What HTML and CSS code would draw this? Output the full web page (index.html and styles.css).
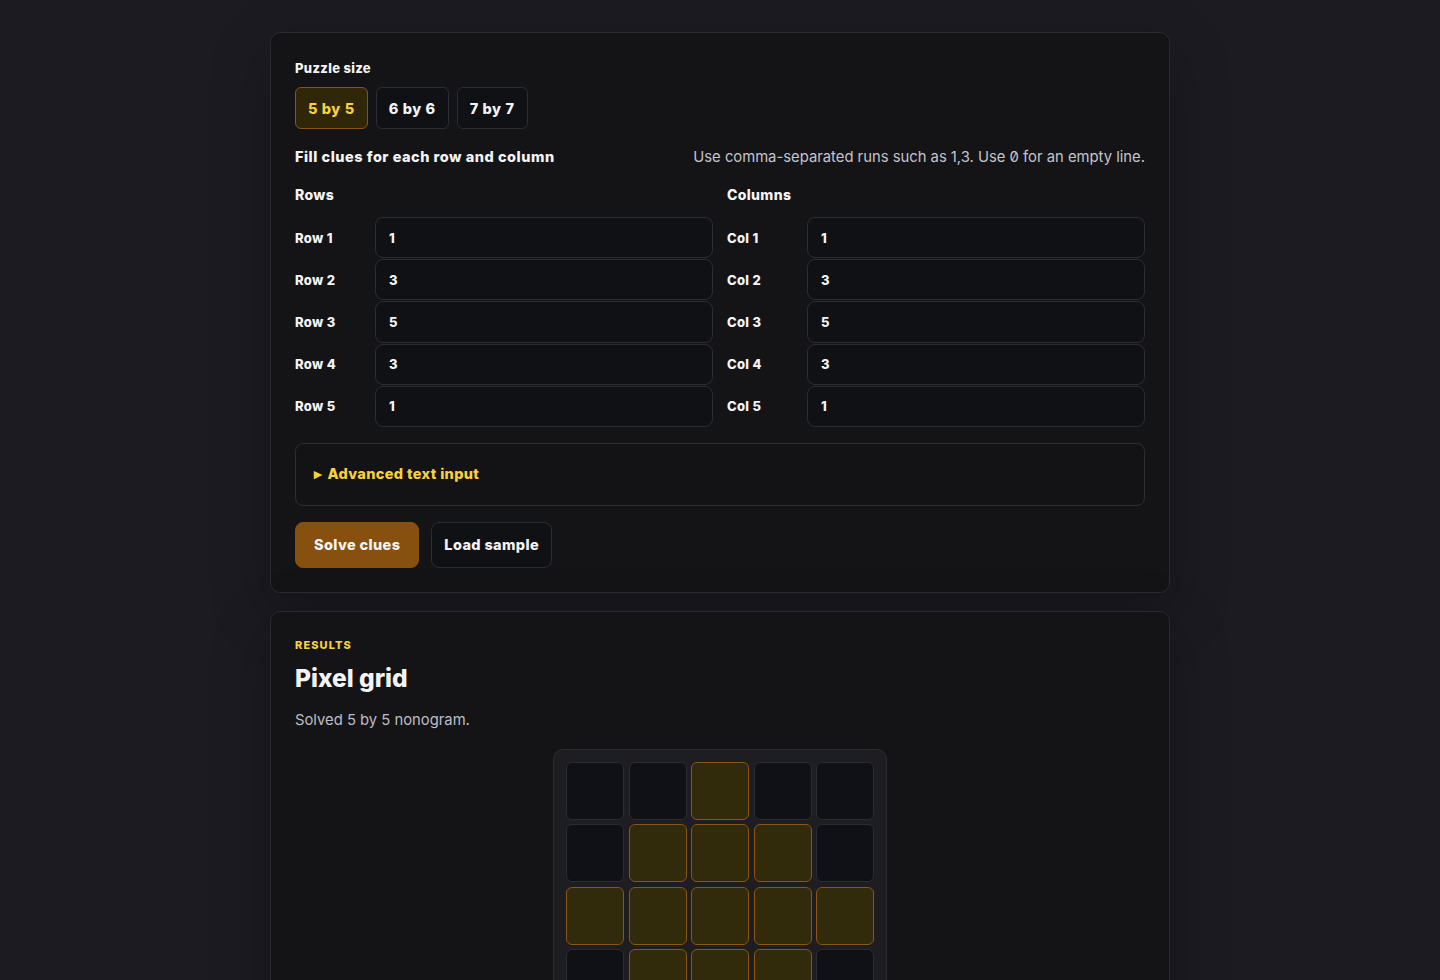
FILE: index.html
```html
<!DOCTYPE html>
<html lang="en">
<head>
<meta charset="utf-8">
<title>Nonogram solver</title>
<link rel="stylesheet" href="styles.css">
</head>
<body>
<main class="page">
  <section class="card">
    <div class="label">Puzzle size</div>
    <div class="sizes">
      <button class="size active">5 by 5</button>
      <button class="size">6 by 6</button>
      <button class="size">7 by 7</button>
    </div>
    <div class="cluehead">
      <div class="title">Fill clues for each row and column</div>
      <div class="hint">Use comma-separated runs such as 1,3. Use 0 for an empty line.</div>
    </div>
    <div class="groups">
      <div class="group">
        <div class="ghead">Rows</div>
        <div class="fields">
          <div class="field"><span class="flabel">Row 1</span><input class="finput" value="1"></div>
          <div class="field"><span class="flabel">Row 2</span><input class="finput" value="3"></div>
          <div class="field"><span class="flabel">Row 3</span><input class="finput" value="5"></div>
          <div class="field"><span class="flabel">Row 4</span><input class="finput" value="3"></div>
          <div class="field"><span class="flabel">Row 5</span><input class="finput" value="1"></div>
        </div>
      </div>
      <div class="group">
        <div class="ghead">Columns</div>
        <div class="fields">
          <div class="field"><span class="flabel">Col 1</span><input class="finput" value="1"></div>
          <div class="field"><span class="flabel">Col 2</span><input class="finput" value="3"></div>
          <div class="field"><span class="flabel">Col 3</span><input class="finput" value="5"></div>
          <div class="field"><span class="flabel">Col 4</span><input class="finput" value="3"></div>
          <div class="field"><span class="flabel">Col 5</span><input class="finput" value="1"></div>
        </div>
      </div>
    </div>
    <details class="adv">
      <summary class="advsum">Advanced text input</summary>
    </details>
    <div class="actions">
      <button class="btn primary">Solve clues</button>
      <button class="btn ghost">Load sample</button>
    </div>
  </section>
  <section class="card">
    <div class="eyebrow">RESULTS</div>
    <h2 class="rtitle">Pixel grid</h2>
    <p class="status">Solved 5 by 5 nonogram.</p>
    <div class="gridwrap">
      <div class="grid">
        <div class="cell"></div><div class="cell"></div><div class="cell on"></div><div class="cell"></div><div class="cell"></div>
        <div class="cell"></div><div class="cell on"></div><div class="cell on"></div><div class="cell on"></div><div class="cell"></div>
        <div class="cell on"></div><div class="cell on"></div><div class="cell on"></div><div class="cell on"></div><div class="cell on"></div>
        <div class="cell"></div><div class="cell on"></div><div class="cell on"></div><div class="cell on"></div><div class="cell"></div>
        <div class="cell"></div><div class="cell"></div><div class="cell on"></div><div class="cell"></div><div class="cell"></div>
      </div>
    </div>
  </section>
</main>
</body>
</html>
```
FILE: styles.css
```css
* { box-sizing: border-box; }
html, body { margin: 0; padding: 0; }
body {
  background: #1c1b22;
  color: #f4f4f6;
  font-family: Inter, "Noto Sans", "Liberation Sans", sans-serif;
  font-feature-settings: "zero" 1;
}
.page {
  width: 900px;
  margin: 0 auto;
  padding-top: 32px;
  display: flex;
  flex-direction: column;
  gap: 18px;
}
.card {
  background: #141417;
  border: 1px solid #2a2a31;
  border-radius: 10px;
  padding: 24px;
  box-shadow: 0 20px 60px rgba(0,0,0,0.25);
}
.label, .size, .title, .ghead, .flabel, .finput, .advsum, .btn, .eyebrow {
  font-family: Inter, "Noto Sans", sans-serif;
  font-weight: 800;
  letter-spacing: 0.025em;
}
.label {
  font-size: 13px;
  line-height: 20px;
  margin-top: 1px;
}
.sizes {
  display: flex;
  gap: 8px;
  margin-top: 9px;
}
.size {
  height: 42px;
  padding: 0 12px;
  background: #101115;
  border: 1px solid #2c2d33;
  border-radius: 6px;
  color: #f4f4f6;
  font-size: 14.5px;
  letter-spacing: 0.04em;
}
.size.active {
  background: #2f2708;
  border-color: #8a5412;
  color: #f7d23b;
}
.cluehead {
  display: flex;
  justify-content: space-between;
  align-items: center;
  margin-top: 18px;
  line-height: 20px;
}
.title { font-size: 14.5px; letter-spacing: 0.035em; }
.hint { font-size: 14.8px; color: #c4c4cc; }
.groups {
  display: grid;
  grid-template-columns: 1fr 1fr;
  gap: 14px;
  margin-top: 18px;
}
.ghead {
  font-size: 14px;
  line-height: 20px;
}
.fields {
  display: flex;
  flex-direction: column;
  gap: 1px;
  margin-top: 12px;
}
.field {
  display: grid;
  grid-template-columns: 80px 1fr;
  align-items: center;
}
.flabel {
  font-size: 13px;
}
.finput {
  height: 41.2px;
  width: 100%;
  background: #101115;
  border: 1px solid #2c2d33;
  border-radius: 8px;
  color: #f4f4f6;
  font-size: 13px;
  padding: 0 13px;
  outline: none;
}
.adv {
  margin-top: 16px;
  border: 1px solid #2c2d33;
  border-radius: 8px;
  background: #131316;
  padding: 20.5px 18px;
}
.advsum {
  list-style: none;
  color: #f7d23b;
  font-size: 14.5px;
  line-height: 20px;
  cursor: pointer;
}
.advsum::-webkit-details-marker { display: none; }
.advsum::before {
  content: "\25B8";
  display: inline-block;
  font-size: 15px;
  margin-right: 5px;
  vertical-align: 0;
}
.actions {
  display: flex;
  gap: 12px;
  margin-top: 16px;
}
.btn {
  height: 46px;
  padding: 0 18px;
  border-radius: 8px;
  font-size: 14.5px;
  color: #f4f4f6;
}
.btn.primary {
  background: #87500f;
  border: 1px solid #87500f;
}
.btn.ghost {
  background: #101115;
  border: 1px solid #2c2d33;
  padding: 0 12px;
}
.eyebrow {
  margin-top: 1px;
  font-size: 11px;
  letter-spacing: 0.1em;
  color: #f7d23b;
  line-height: 16px;
}
.rtitle {
  margin: 9px 0 0;
  font-size: 24.5px;
  font-weight: 800;
  line-height: 32px;
}
.status {
  margin: 15px 0 0;
  font-size: 14.8px;
  color: #bdbdc5;
  line-height: 22px;
}
.gridwrap {
  display: flex;
  justify-content: center;
  margin-top: 18px;
}
.grid {
  display: grid;
  grid-template-columns: repeat(5, 58px);
  grid-auto-rows: 58px;
  gap: 4.5px;
  padding: 12px;
  background: #1e1e22;
  border: 1px solid #2b2b31;
  border-radius: 10px;
}
.cell {
  background: #101116;
  border: 1px solid #2b2c32;
  border-radius: 6px;
}
.cell.on {
  background: #312a0b;
  border-color: #8a5612;
}
```
